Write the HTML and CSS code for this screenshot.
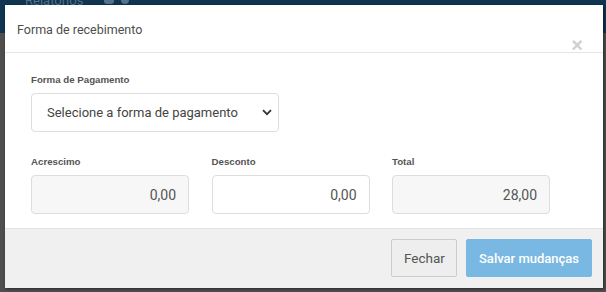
FILE: index.html
```html
<!DOCTYPE html>
<html lang="pt-BR">
<head>
<meta charset="UTF-8">
<title>Forma de recebimento</title>
<link rel="stylesheet" href="styles.css">
</head>
<body>

<div class="navbar">
  <span class="nav-item">Relatórios</span>
  <span class="nav-icon"></span>
  <span class="nav-icon round"></span>
</div>

<div class="modal">
  <div class="modal-header">
    <h4 class="modal-title">Forma de recebimento</h4>
    <button class="close">&times;</button>
  </div>

  <div class="modal-body">
    <label class="field-label">Forma de Pagamento</label>
    <div class="select-wrap">
      <select class="form-select">
        <option>Selecione a forma de pagamento</option>
      </select>
      <svg class="chevron" width="10" height="7" viewBox="0 0 10 7">
        <path d="M1 1.2 L5 5.2 L9 1.2" fill="none" stroke="#333" stroke-width="1.8"/>
      </svg>
    </div>

    <div class="totals">
      <div class="field">
        <label class="field-label">Acrescimo</label>
        <input class="form-input readonly" type="text" value="0,00" readonly>
      </div>
      <div class="field">
        <label class="field-label">Desconto</label>
        <input class="form-input" type="text" value="0,00">
      </div>
      <div class="field">
        <label class="field-label">Total</label>
        <input class="form-input readonly" type="text" value="28,00" readonly>
      </div>
    </div>
  </div>

  <div class="modal-footer">
    <button class="btn btn-default">Fechar</button>
    <button class="btn btn-primary" disabled>Salvar mudanças</button>
  </div>
</div>

</body>
</html>
```

FILE: styles.css
```css
body {
  margin: 0;
  height: 292px;
  overflow: hidden;
  background: #4f4f4f;
  font-family: Roboto, 'Liberation Sans', Arial, sans-serif;
  position: relative;
}

.navbar {
  height: 33px;
  background: #0f3553;
  display: flex;
  align-items: flex-start;
  padding-left: 25px;
}

.nav-item {
  color: #55728c;
  font-size: 13px;
  line-height: 13px;
  margin-top: -6px;
}

.nav-icon {
  width: 10px;
  height: 4px;
  margin: 0 0 0 21px;
  background: #55728c;
  border-radius: 0 0 3px 3px;
}

.nav-icon.round {
  width: 8px;
  margin-left: 7px;
  border-radius: 0 0 5px 5px;
}

.modal {
  position: absolute;
  top: 5px;
  left: 5px;
  width: 598px;
  height: 283px;
  background: #fff;
  display: flex;
  flex-direction: column;
  box-shadow: 1px 1px 3px rgba(0, 0, 0, 0.5);
}

.modal-header {
  height: 47px;
  border-bottom: 1px solid #e5e5e5;
  display: flex;
  justify-content: space-between;
  align-items: flex-start;
  padding: 0 20px 0 12px;
}

.modal-title {
  margin: 16px 0 0;
  font-size: 12.5px;
  font-weight: 400;
  color: #4d4d4d;
  line-height: 17px;
}

.close {
  background: none;
  border: none;
  padding: 0;
  margin-top: 31px;
  font-size: 20px;
  line-height: 18px;
  font-weight: bold;
  font-family: 'Liberation Sans', Arial, sans-serif;
  color: #d0d0d0;
}

.modal-body {
  flex: 1;
  padding: 20px 26px 0;
}

.field-label {
  display: block;
  font-family: 'Liberation Sans', Arial, sans-serif;
  font-size: 9.7px;
  font-weight: bold;
  color: #555;
  line-height: 14px;
  margin-bottom: 6px;
}

.select-wrap {
  position: relative;
  width: 248px;
}

.form-select {
  width: 248px;
  height: 39px;
  appearance: none;
  background: #fff;
  border: 1px solid #ddd;
  border-radius: 4px;
  padding: 0 15px;
  font-family: Roboto, sans-serif;
  font-size: 13px;
  color: #444;
}

.chevron {
  position: absolute;
  right: 7px;
  top: 16px;
}

.totals {
  display: grid;
  grid-template-columns: repeat(3, 158px);
  column-gap: 22.5px;
  margin-top: 23px;
}

.form-input {
  box-sizing: border-box;
  width: 158px;
  height: 39px;
  border: 1px solid #ddd;
  border-radius: 4px;
  background: #fff;
  text-align: right;
  padding: 0 12px;
  font-family: Roboto, sans-serif;
  font-size: 14px;
  color: #555;
}

.form-input.readonly {
  background: #f7f7f7;
}

.modal-footer {
  height: 59px;
  border-top: 1px solid #e3e3e3;
  background: #f0f0f0;
  display: flex;
  justify-content: flex-end;
  align-items: flex-start;
  gap: 9px;
  padding-right: 11px;
}

.btn {
  margin-top: 10px;
  height: 38px;
  border-radius: 2px;
  font-family: Roboto, sans-serif;
  font-size: 13.5px;
  padding: 0 12px;
  white-space: nowrap;
}

.btn-default {
  width: 66px;
  background: #eeeeee;
  border: 1px solid #cccccc;
  color: #555;
}

.btn-primary {
  width: 126px;
  background: #79b8e3;
  border: 1px solid #79b8e3;
  color: #fff;
  font-size: 13px;
  font-weight: 500;
}
```
